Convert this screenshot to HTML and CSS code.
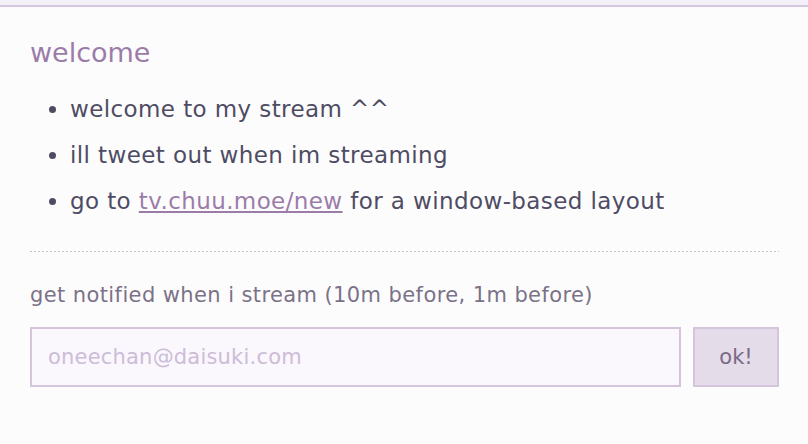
FILE: index.html
```html
<!DOCTYPE html>
<html>
<head>
<meta charset="utf-8">
<link rel="stylesheet" href="styles.css">
</head>
<body>
<div class="topbar"></div>
<main class="panel">
  <h2 class="title">welcome</h2>
  <ul class="notes">
    <li>welcome to my stream ^^</li>
    <li>ill tweet out when im streaming</li>
    <li>go to <a href="#">tv.chuu.moe/new</a> for a window-based layout</li>
  </ul>
  <div class="divider"></div>
  <p class="notify">get notified when i stream (10m before, 1m before)</p>
  <form class="signup">
    <input class="email" type="email" placeholder="oneechan@daisuki.com">
    <button class="ok" type="button">ok!</button>
  </form>
</main>
</body>
</html>
```
FILE: styles.css
```css
html, body {
  margin: 0;
  padding: 0;
  background: #fdfcfd;
}
.topbar {
  height: 5px;
  background: #f3f0f7;
  border-bottom: 2px solid #d5c5dd;
}
.panel {
  padding: 0 29px 0 30px;
  font-family: "DejaVu Sans", sans-serif;
}
.title {
  margin: 0;
  padding-top: 30px;
  font-weight: normal;
  font-size: 27px;
  line-height: 32px;
  color: #9b7ca9;
}
.notes {
  margin: 17px 0 0 0;
  padding-left: 40px;
  font-size: 23px;
  letter-spacing: 0.4px;
  line-height: 46px;
  color: #4e4c63;
}
.notes a {
  color: #9b7ca9;
}
.divider {
  margin-top: 27px;
  height: 1px;
  background-image: repeating-linear-gradient(to right, #c4c4cc 0 2px, transparent 2px 4px);
}
.notify {
  margin: 30px 0 0 0;
  font-size: 21px;
  letter-spacing: 0.4px;
  line-height: 26px;
  color: #7b7288;
}
.signup {
  display: flex;
  gap: 12px;
  margin-top: 19px;
}
.email {
  flex: 1;
  height: 60px;
  box-sizing: border-box;
  border: 2px solid #d4c5dd;
  background: #faf7fd;
  padding: 0 16px;
  font-family: "DejaVu Sans", sans-serif;
  font-size: 21px;
  letter-spacing: 0.2px;
  outline: none;
  margin: 0;
}
.email::placeholder {
  color: #cdbdd8;
}
.ok {
  width: 86px;
  height: 60px;
  box-sizing: border-box;
  border: 2px solid #d4c5dd;
  background: #e5dcea;
  font-family: "DejaVu Sans", sans-serif;
  font-size: 21px;
  color: #7a6a86;
  margin: 0;
  padding: 0;
}
```
